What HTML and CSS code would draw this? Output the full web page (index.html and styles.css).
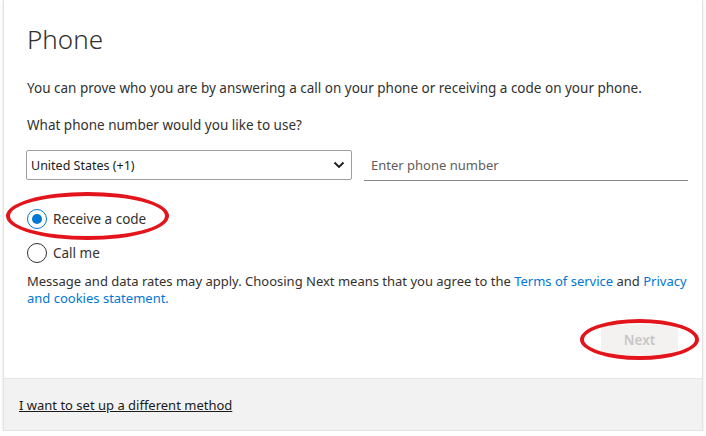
FILE: index.html
```html
<!DOCTYPE html>
<html lang="en">
<head>
  <meta charset="UTF-8">
  <title>Phone</title>
  <link rel="stylesheet" href="styles.css">
</head>
<body>
<div class="card">
  <div class="main">
    <h2 class="title">Phone</h2>
    <p class="text">You can prove who you are by answering a call on your phone or receiving a code on your phone.</p>
    <p class="text question">What phone number would you like to use?</p>
    <div class="row">
      <div class="select">
        <span>United States (+1)</span>
        <svg width="12" height="8" viewBox="0 0 12 8"><path d="M1.5 1.5 L6 6 L10.5 1.5" fill="none" stroke="#1b1b1b" stroke-width="1.8"/></svg>
      </div>
      <input class="phone" type="text" placeholder="Enter phone number">
    </div>
    <div class="options">
      <label class="option checked"><span class="radio"></span>Receive a code</label>
      <label class="option"><span class="radio"></span>Call me</label>
      <span class="mark mark-radio"></span>
    </div>
    <p class="text note">Message and data rates may apply. Choosing Next means that you agree to the <a href="#">Terms of service</a> and <a href="#">Privacy and cookies statement.</a></p>
    <div class="actions">
      <button class="next" disabled>Next</button>
      <span class="mark mark-next"></span>
    </div>
  </div>
  <div class="footer">
    <a href="#">I want to set up a different method</a>
  </div>
</div>
</body>
</html>
```

FILE: styles.css
```css
html,
body {
  margin: 0;
  padding: 0;
  background: #fff;
  font-family: 'Noto Sans', 'Open Sans', sans-serif;
  color: #323130;
}
body {
  padding: 0 3px;
}
.card {
  height: 431px;
  display: flex;
  flex-direction: column;
  border: 1px solid #e3e3e3;
  border-top: none;
  box-shadow: 0 1px 3px rgba(0, 0, 0, 0.12);
  box-sizing: border-box;
}
.main {
  flex: 1;
  padding: 0 8px 0 23px;
}
.title {
  margin: 21px 0 0;
  font-size: 26px;
  font-weight: 300;
  line-height: 36px;
  color: #323130;
}
.text {
  margin: 0;
  font-size: 13.5px;
  line-height: 18px;
}
.text:first-of-type {
  margin-top: 22px;
}
.question {
  margin-top: 19px;
}
.row {
  display: flex;
  gap: 12px;
  margin-top: 16px;
}
.select {
  width: 326px;
  height: 30px;
  box-sizing: border-box;
  border: 1px solid #a19f9d;
  border-radius: 2px;
  margin-left: -1px;
  display: flex;
  align-items: center;
  justify-content: space-between;
  padding: 0 6px 0 4px;
  font-size: 12.5px;
  color: #1b1b1b;
}
.phone {
  width: 324px;
  height: 31px;
  box-sizing: border-box;
  border: none;
  border-bottom: 1px solid #8a8886;
  padding: 0 7px;
  font-family: inherit;
  font-size: 13px;
  outline: none;
}
.phone::placeholder {
  color: #605e5c;
}
.options {
  position: relative;
  display: flex;
  flex-direction: column;
  gap: 14px;
  margin-top: 28px;
}
.option {
  display: flex;
  align-items: center;
  gap: 6px;
  font-size: 13.5px;
  line-height: 20px;
}
.radio {
  width: 20px;
  height: 20px;
  box-sizing: border-box;
  border: 1px solid #323130;
  border-radius: 50%;
  display: flex;
  align-items: center;
  justify-content: center;
}
.checked .radio {
  border-color: #0078d4;
}
.checked .radio::after {
  content: '';
  width: 10px;
  height: 10px;
  border-radius: 50%;
  background: #0078d4;
}
.note {
  margin-top: 10px;
  font-size: 13px;
  line-height: 17px;
}
.note a {
  color: #0078d4;
  text-decoration: none;
}
.actions {
  position: relative;
  display: flex;
  justify-content: flex-end;
  margin-top: 18px;
}
.next {
  width: 77px;
  height: 30px;
  border: none;
  background: #f3f2f1;
  color: #c8c6c4;
  font-family: inherit;
  font-size: 13.5px;
  font-weight: 600;
  margin-right: 16px;
}
.mark {
  position: absolute;
  border: 4px solid #e3141b;
  border-radius: 50%;
  box-sizing: border-box;
}
.mark-radio {
  left: -21px;
  top: -17px;
  width: 163px;
  height: 48px;
}
.mark-next {
  right: -5px;
  top: -6px;
  width: 119px;
  height: 41px;
}
.footer {
  height: 52px;
  box-sizing: border-box;
  background: #f2f2f2;
  border-top: 1px solid #e6e6e6;
  display: flex;
  align-items: center;
  padding-left: 15px;
}
.footer a {
  color: #1b1b1b;
  font-size: 13px;
  text-decoration: underline;
}
```
